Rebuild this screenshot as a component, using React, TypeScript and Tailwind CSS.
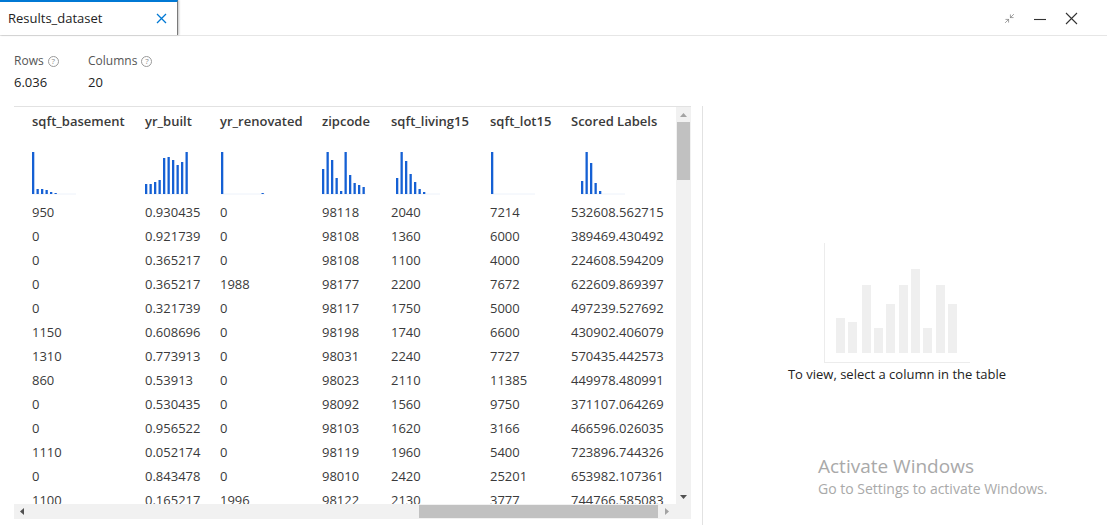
import React from "react";
import { Minimize2 } from "lucide-react";

const font = { fontFamily: '"Open Sans", "Noto Sans", sans-serif' };

type Col = { name: string; width: number; offset: number; bars: number[] };

const cols: Col[] = [
  { name: "sqft_basement", width: 113, offset: 0, bars: [42, 5, 5, 4, 2, 1] },
  { name: "yr_built", width: 75, offset: 0, bars: [10, 10, 12, 14, 36, 37, 34, 29, 32, 42] },
  { name: "yr_renovated", width: 102, offset: 1, bars: [42, 0, 0, 0, 0, 0, 0, 0, 0, 1] },
  { name: "zipcode", width: 69, offset: 0, bars: [25, 42, 34, 16, 3, 42, 19, 11, 9, 7] },
  { name: "sqft_living15", width: 99, offset: 5, bars: [16, 42, 33, 20, 12, 5, 2] },
  { name: "sqft_lot15", width: 81, offset: 1, bars: [42] },
  { name: "Scored Labels", width: 120, offset: 10, bars: [13, 42, 31, 11, 3] },
];

const rows: string[][] = [
  ["950", "0.930435", "0", "98118", "2040", "7214", "532608.562715"],
  ["0", "0.921739", "0", "98108", "1360", "6000", "389469.430492"],
  ["0", "0.365217", "0", "98108", "1100", "4000", "224608.594209"],
  ["0", "0.365217", "1988", "98177", "2200", "7672", "622609.869397"],
  ["0", "0.321739", "0", "98117", "1750", "5000", "497239.527692"],
  ["1150", "0.608696", "0", "98198", "1740", "6600", "430902.406079"],
  ["1310", "0.773913", "0", "98031", "2240", "7727", "570435.442573"],
  ["860", "0.53913", "0", "98023", "2110", "11385", "449978.480991"],
  ["0", "0.530435", "0", "98092", "1560", "9750", "371107.064269"],
  ["0", "0.956522", "0", "98103", "1620", "3166", "466596.026035"],
  ["1110", "0.052174", "0", "98119", "1960", "5400", "723896.744326"],
  ["0", "0.843478", "0", "98010", "2420", "25201", "653982.107361"],
  ["1100", "0.165217", "1996", "98122", "2130", "3777", "744766.585083"],
];

function Histogram({ bars, offset }: { bars: number[]; offset: number }) {
  return (
    <svg width="70" height="44" className="block">
      <line x1={offset} y1="43" x2={offset + 44} y2="43" stroke="#edf2fa" strokeWidth="1" />
      {bars.map((h, i) =>
        h > 0 ? (
          <rect key={i} x={offset + i * 4.5} y={43 - h} width="2.3" height={h} fill="#1560d4" />
        ) : null
      )}
    </svg>
  );
}

function Help() {
  return (
    <span className="inline-flex w-[11px] h-[11px] rounded-full border border-[#9a9a9a] text-[8px] leading-none items-center justify-center text-[#8a8a8a] ml-[4px]">
      ?
    </span>
  );
}

export default function App() {
  const placeholder = [
    [836, 318],
    [848, 322],
    [862, 285],
    [874, 328],
    [886, 304],
    [899, 285],
    [911, 269],
    [923, 328],
    [936, 285],
    [948, 304],
  ];
  return (
    <div className="w-[1107px] h-[525px] bg-white relative overflow-hidden text-[#333]" style={font}>
      {/* Top bar */}
      <div className="h-[36px] flex border-b border-[#e6e6e6]">
        <div className="w-[178px] h-[35px] border-t-2 border-t-[#0078d4] border-r border-r-[#7a7a7a] shadow-[1px_0_2px_rgba(0,0,0,0.25)] flex items-center pl-[8px] pr-[10px] justify-between">
          <span className="text-[13px] text-[#222]">Results_dataset</span>
          <svg width="11" height="11" viewBox="0 0 11 11">
            <path d="M1 1 L10 10 M10 1 L1 10" stroke="#0078d4" strokeWidth="1.3" />
          </svg>
        </div>
        <div className="flex-1" />
        <div className="flex items-center gap-[19px] pr-[29px] pt-[2px]">
          <Minimize2 size={11} strokeWidth={1.5} className="text-[#777]" />
          <svg width="12" height="12" viewBox="0 0 12 12">
            <path d="M0 6.5 H12" stroke="#333" strokeWidth="1.1" />
          </svg>
          <svg width="13" height="13" viewBox="0 0 13 13">
            <path d="M1 1 L12 12 M12 1 L1 12" stroke="#333" strokeWidth="1.1" />
          </svg>
        </div>
      </div>

      {/* Stats */}
      <div className="flex pl-[14px] pt-[17px] h-[70px]">
        <div className="w-[74px]">
          <div className="flex items-center text-[12px] text-[#555] h-[16px]">
            Rows <Help />
          </div>
          <div className="text-[13px] text-[#222] mt-[4px]">6.036</div>
        </div>
        <div>
          <div className="flex items-center text-[12px] text-[#555] h-[16px]">
            Columns <Help />
          </div>
          <div className="text-[13px] text-[#222] mt-[4px]">20</div>
        </div>
      </div>

      {/* Main */}
      <div className="flex h-[419px]">
        {/* Table */}
        <div className="ml-[14px] w-[677px] h-[413px] border-t border-[#e2e2e2] flex flex-col">
          <div className="flex flex-1 min-h-0">
            <div className="flex-1 overflow-hidden pl-[18px]">
              <div className="flex flex-col">
                <div className="flex">
                  {cols.map((c) => (
                    <div key={c.name} style={{ width: c.width }} className="shrink-0">
                      <div className="h-[30px] flex items-center text-[13px] font-semibold text-[#3a3a3a] whitespace-nowrap">
                        {c.name}
                      </div>
                      <div className="h-[64px] pt-[14px]">
                        <Histogram bars={c.bars} offset={c.offset} />
                      </div>
                    </div>
                  ))}
                </div>
                {rows.map((r, i) => (
                  <div key={i} className="flex h-[24px] items-center">
                    {r.map((v, j) => (
                      <div
                        key={j}
                        style={{ width: cols[j].width }}
                        className="shrink-0 text-[13px] text-[#3a3a3a] whitespace-nowrap"
                      >
                        {v}
                      </div>
                    ))}
                  </div>
                ))}
              </div>
            </div>
            {/* vertical scrollbar */}
            <div className="w-[15px] bg-[#f1f1f1] flex flex-col items-center">
              <div className="h-[15px] flex items-center justify-center">
                <svg width="7" height="4" viewBox="0 0 7 4">
                  <path d="M0 4 L3.5 0 L7 4 Z" fill="#a3a3a3" />
                </svg>
              </div>
              <div className="w-[13px] h-[58px] bg-[#c1c1c1]" />
              <div className="flex-1" />
              <div className="h-[15px] flex items-center justify-center">
                <svg width="7" height="4" viewBox="0 0 7 4">
                  <path d="M0 0 L7 0 L3.5 4 Z" fill="#505050" />
                </svg>
              </div>
            </div>
          </div>
          {/* horizontal scrollbar */}
          <div className="h-[15px] flex">
            <div className="flex-1 bg-[#f1f1f1] flex items-center">
              <div className="w-[15px] flex items-center justify-center">
                <svg width="4" height="7" viewBox="0 0 4 7">
                  <path d="M4 0 L4 7 L0 3.5 Z" fill="#505050" />
                </svg>
              </div>
              <div className="w-[390px]" />
              <div className="w-[239px] h-[13px] bg-[#c1c1c1]" />
              <div className="w-[18px] flex items-center justify-center">
                <svg width="4" height="7" viewBox="0 0 4 7">
                  <path d="M0 0 L4 3.5 L0 7 Z" fill="#a3a3a3" />
                </svg>
              </div>
            </div>
            <div className="w-[15px] bg-[#f1f1f1]" />
          </div>
        </div>

        {/* Right panel */}
        <div className="ml-[11px] flex-1 border-l border-[#e2e2e2] flex flex-col items-center justify-center pr-[16px] pb-[4px]">
          <svg width="150" height="122" viewBox="822 242 150 122" className="block">
            <line x1="824.5" y1="243" x2="824.5" y2="363" stroke="#ececec" strokeWidth="1" />
            <line x1="824" y1="362.5" x2="970" y2="362.5" stroke="#ececec" strokeWidth="1" />
            {placeholder.map(([x, y], i) => (
              <rect key={i} x={x} y={y} width="9" height={353 - y} fill="#efefef" />
            ))}
          </svg>
          <div className="text-[13px] text-[#222] mt-[1px]">To view, select a column in the table</div>
        </div>
      </div>

      {/* Activate Windows watermark */}
      <div className="absolute left-[818px] top-[455px] text-[#a9a9a9] leading-tight pointer-events-none">
        <div className="text-[19px]">Activate Windows</div>
        <div className="text-[14px] mt-[1px]">Go to Settings to activate Windows.</div>
      </div>
    </div>
  );
}
